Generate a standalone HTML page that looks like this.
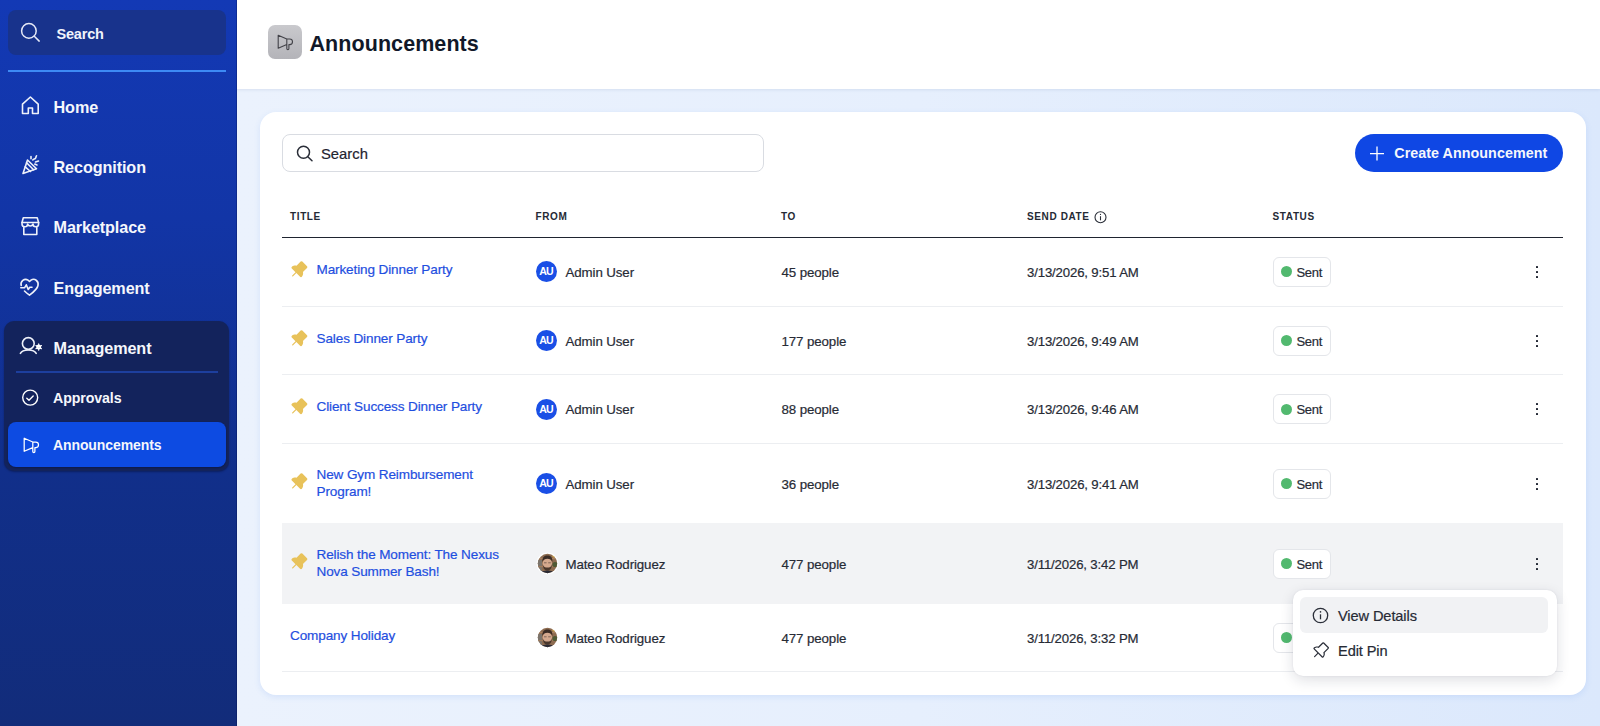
<!DOCTYPE html>
<html><head><meta charset="utf-8"><style>
*{box-sizing:border-box;margin:0;padding:0}
html,body{width:1600px;height:726px;overflow:hidden;font-family:"Liberation Sans",sans-serif;background:#e6effb}
.t{position:absolute;line-height:1;white-space:nowrap}
.a{position:absolute}
svg{position:absolute;overflow:visible}
.sb{position:absolute;left:0;top:0;width:237px;height:726px;background:linear-gradient(180deg,#1339b5 0%,#1235a6 30%,#112f8a 65%,#122c7a 100%);}
.main{position:absolute;left:237px;top:0;width:1363px;height:726px;background:linear-gradient(90deg,#ebf2fd 0%,#e6effd 50%,#dbe8fc 100%)}
.hdr{position:absolute;left:237px;top:0;width:1363px;height:89px;background:#fff;box-shadow:0 1px 3px rgba(40,70,130,0.10)}
.card{position:absolute;left:260px;top:112px;width:1326px;height:583px;background:#fff;border-radius:16px;box-shadow:0 2px 6px rgba(60,120,230,0.13)}
.sep{position:absolute;left:282px;width:1281px;height:1px;background:#eceef1}
.pin{position:absolute}
.badge{position:absolute;left:1273px;width:58px;height:30px;border:1px solid #e4e6ea;border-radius:6px;background:#fff}
.dot{position:absolute;left:7px;top:8.5px;width:11px;height:11px;border-radius:50%;background:#52b96f}
.keb{position:absolute;left:1536px;width:2px;height:2px;background:#1f2430;border-radius:0.5px}
.au{position:absolute;left:536px;width:21px;height:21px;border-radius:50%;background:#1a4fe6;color:#fff;font-weight:bold;font-size:10.6px;line-height:21.5px;text-align:center;letter-spacing:-0.9px;text-indent:-0.9px}
.ph{position:absolute;left:536px;width:21px;height:21px;border-radius:50%;background:radial-gradient(circle at 50% 40%,#c99a7a 0%,#a4765a 35%,#5a4438 60%,#3c3430 100%)}
</style></head><body>
<div class="main"></div><div class="hdr"></div><div class="sb"></div><div class="a" style="left:236px;top:0;width:1px;height:726px;background:rgba(0,10,70,0.28)"></div><div class="a" style="left:8px;top:10px;width:218px;height:45px;border-radius:8px;background:#18338c"></div><svg style="left:19.5px;top:22px" width="22" height="22" viewBox="0 0 22 22"><circle cx="8.9" cy="8.9" r="7.3" fill="none" stroke="#e6eaf7" stroke-width="1.5"/><path d="M14.3 14.3 L19.2 19.1" stroke="#e6eaf7" stroke-width="1.5" stroke-linecap="round"/></svg><div class="t" style="left:56.5px;top:27.03px;font-size:14.5px;color:#f0f3fb;font-weight:bold;letter-spacing:-0.2px;">Search</div>
<div class="a" style="left:8px;top:70px;width:218px;height:2px;background:#3d8af5"></div><div class="a" style="left:4px;top:321px;width:225px;height:149.5px;border-radius:10px;background:#13235c;box-shadow:0 1px 2px rgba(0,0,20,0.35)"></div><div class="a" style="left:16px;top:371px;width:202px;height:2px;background:#1d3f9e"></div><div class="a" style="left:8px;top:422px;width:218px;height:45px;border-radius:8px;background:#0d4be2;box-shadow:0 1px 2px rgba(0,0,0,0.25)"></div><div class="t" style="left:53.5px;top:98.79px;font-size:16.2px;color:#f5f7fc;font-weight:bold;letter-spacing:-0.1px;">Home</div>
<div class="t" style="left:53.5px;top:159.19px;font-size:16.2px;color:#f5f7fc;font-weight:bold;letter-spacing:-0.1px;">Recognition</div>
<div class="t" style="left:53.5px;top:219.39px;font-size:16.2px;color:#f5f7fc;font-weight:bold;letter-spacing:-0.1px;">Marketplace</div>
<div class="t" style="left:53.5px;top:279.89px;font-size:16.2px;color:#f5f7fc;font-weight:bold;letter-spacing:-0.1px;">Engagement</div>
<div class="t" style="left:53.5px;top:339.79px;font-size:16.2px;color:#f5f7fc;font-weight:bold;letter-spacing:-0.1px;">Management</div>
<div class="t" style="left:53px;top:391.38px;font-size:14.2px;color:#f5f7fc;font-weight:bold;letter-spacing:-0.1px;">Approvals</div>
<div class="t" style="left:53px;top:438.45px;font-size:14px;color:#f5f7fc;font-weight:bold;letter-spacing:-0.1px;">Announcements</div>
<svg style="left:21px;top:96px" width="19" height="19" viewBox="0 0 19 19"><path d="M1.5 17.5 V8.2 L9.4 1 L17.2 8.2 V17.5 H11.5 V12 H7.3 V17.5 Z" stroke="#eef1fa" stroke-width="1.6" fill="none" stroke-linecap="round" stroke-linejoin="round"/></svg><svg style="left:21px;top:154px" width="22" height="22" viewBox="0 0 22 22"><path d="M2 19.5 L6.5 6 L15.5 14.8 Z" stroke="#eef1fa" stroke-width="1.6" fill="none" stroke-linecap="round" stroke-linejoin="round"/><path d="M4.2 12.8 L9.5 17.5 M5.6 8.8 L12.6 15.8" stroke="#eef1fa" stroke-width="1.6" fill="none" stroke-linecap="round" stroke-linejoin="round"/><path d="M10 2.5 V4.8 M11.8 6 C13 4.5 13.5 5.5 14.5 4.2 C15.5 3 14.6 2.5 15.5 1.8 M14.5 8 L17.5 7 M13.8 10 L16 11" stroke="#eef1fa" stroke-width="1.6" fill="none" stroke-linecap="round" stroke-linejoin="round"/></svg><svg style="left:20px;top:216px" width="21" height="21" viewBox="0 0 21 21"><path d="M3.8 11.5 V18.5 H16.8 V11.5" stroke="#eef1fa" stroke-width="1.6" fill="none" stroke-linecap="round" stroke-linejoin="round"/><path d="M2 6.5 L3.3 1.8 H17.2 L18.6 6.5 Z" stroke="#eef1fa" stroke-width="1.6" fill="none" stroke-linecap="round" stroke-linejoin="round"/><path d="M2 6.5 V8 A2.8 2.8 0 0 0 7.6 8 A2.8 2.8 0 0 0 13 8 A2.8 2.8 0 0 0 18.6 8 V6.5" stroke="#eef1fa" stroke-width="1.6" fill="none" stroke-linecap="round" stroke-linejoin="round"/></svg><svg style="left:19px;top:277px" width="22" height="22" viewBox="0 0 22 22"><path d="M2.2 8.5 C1 4.5 5.5 0.8 9 3.2 L10.5 4.5 L12 3.2 C15.5 0.8 20 4 19 8.5 C18.5 11.5 14 15.5 10.5 18.2 C8.5 16.7 7 15.5 5.5 14" stroke="#eef1fa" stroke-width="1.6" fill="none" stroke-linecap="round" stroke-linejoin="round"/><path d="M1.8 10.8 H5.5 L7.3 7.8 L9.2 12.5 L10.8 10.2 H13" stroke="#eef1fa" stroke-width="1.6" fill="none" stroke-linecap="round" stroke-linejoin="round"/></svg><svg style="left:19px;top:337px" width="24" height="20" viewBox="0 0 24 20"><circle cx="9.3" cy="6.5" r="5.9" stroke="#eef1fa" stroke-width="1.6" fill="none" stroke-linecap="round" stroke-linejoin="round"/><path d="M1.4 16.4 C3.6 11.9 15 11.9 17.2 16.4" stroke="#eef1fa" stroke-width="1.6" fill="none" stroke-linecap="round" stroke-linejoin="round"/><circle cx="19.7" cy="10.1" r="2.5" fill="#fff"/><circle cx="19.7" cy="10.1" r="0.8" fill="#13235c"/><path d="M19.7 6.9 V13.3 M16.9 8.5 L22.5 11.7 M16.9 11.7 L22.5 8.5" stroke="#fff" stroke-width="1.1" stroke-linecap="round"/></svg><svg style="left:21px;top:389px" width="18" height="18" viewBox="0 0 18 18"><circle cx="9.2" cy="8.6" r="7.5" stroke="#fff" stroke-width="1.4" fill="none"/><path d="M5.8 9.3 L8 11.3 L12.2 7" stroke="#fff" stroke-width="1.4" fill="none" stroke-linecap="round" stroke-linejoin="round"/></svg><svg style="left:22.6px;top:437px" width="18" height="18" viewBox="0 0 18 18"><path d="M1.2 1.2 V14.3 L9.8 10.6 V5 Z M9.8 5 H12.7 A2.8 2.8 0 0 1 12.7 10.6 H11.9 M9.8 10.6 V14.6 A1 1 0 0 0 11.9 14.6 V10.6" stroke="#fff" stroke-width="1.25" fill="none" stroke-linejoin="round" stroke-linecap="round"/></svg><div class="a" style="left:268px;top:25px;width:34px;height:34px;border-radius:7px;background:linear-gradient(180deg,#c9c9cd,#b4b4b9)"></div><svg style="left:276.6px;top:33.6px" width="18" height="18" viewBox="0 0 18 18"><path d="M1.2 1.2 V14.3 L9.8 10.6 V5 Z M9.8 5 H12.7 A2.8 2.8 0 0 1 12.7 10.6 H11.9 M9.8 10.6 V14.6 A1 1 0 0 0 11.9 14.6 V10.6" stroke="#424248" stroke-width="1.1" fill="none" stroke-linejoin="round" stroke-linecap="round"/></svg><div class="t" style="left:309.5px;top:33.55px;font-size:21.5px;color:#111829;font-weight:bold;letter-spacing:0.07px;">Announcements</div>
<div class="card"></div><div class="a" style="left:282px;top:134px;width:482px;height:38px;border:1px solid #d9dce2;border-radius:8px;background:#fff"></div><svg style="left:296px;top:145px" width="18" height="18" viewBox="0 0 18 18"><circle cx="7.5" cy="7.3" r="6" fill="none" stroke="#2a2e38" stroke-width="1.5"/><path d="M11.8 11.7 L16 15.8" stroke="#2a2e38" stroke-width="1.5" stroke-linecap="round"/></svg><div class="t" style="left:321px;top:146.87px;font-size:14.8px;color:#1f2430;font-weight:normal;letter-spacing:0px;-webkit-text-stroke:0.2px #1f2430;">Search</div>
<div class="a" style="left:1355px;top:134px;width:208px;height:38px;border-radius:19px;background:#0f47e4"></div><svg style="left:1369px;top:146px" width="16" height="16" viewBox="0 0 16 16"><path d="M8 0.6 V14.6 M1 7.6 H15" stroke="#fff" stroke-width="1.3" stroke-linecap="butt"/></svg><div class="t" style="left:1394.3px;top:145.90px;font-size:14.3px;color:#f5f7fc;font-weight:bold;letter-spacing:0.05px;">Create Announcement</div>
<div class="t" style="left:290px;top:211.94px;font-size:10.0px;color:#252a35;font-weight:bold;letter-spacing:0.62px;">TITLE</div>
<div class="t" style="left:535.5px;top:211.94px;font-size:10.0px;color:#252a35;font-weight:bold;letter-spacing:0.62px;">FROM</div>
<div class="t" style="left:781px;top:211.94px;font-size:10.0px;color:#252a35;font-weight:bold;letter-spacing:0.62px;">TO</div>
<div class="t" style="left:1027px;top:211.94px;font-size:10.0px;color:#252a35;font-weight:bold;letter-spacing:0.62px;">SEND DATE</div>
<div class="t" style="left:1272.5px;top:211.94px;font-size:10.0px;color:#252a35;font-weight:bold;letter-spacing:0.62px;">STATUS</div>
<svg style="left:1094px;top:211px" width="13" height="13" viewBox="0 0 13 13"><circle cx="6.5" cy="6.2" r="5.5" fill="none" stroke="#2a2e38" stroke-width="1.1"/><path d="M6.5 5.2 V9.3" stroke="#2a2e38" stroke-width="1.1"/><circle cx="6.5" cy="3.4" r="0.6" fill="#2a2e38"/></svg><div class="a" style="left:282px;top:236.5px;width:1281px;height:1.5px;background:#1f2430"></div><div class="a" style="left:282px;top:523px;width:1281px;height:81px;background:#f2f3f5"></div><div class="sep" style="top:305.5px"></div><div class="sep" style="top:374.0px"></div><div class="sep" style="top:442.5px"></div><div class="sep" style="top:671.0px"></div><div class="t" style="left:316.5px;top:262.53px;font-size:13.55px;color:#1f4fe0;font-weight:normal;letter-spacing:-0.12px;-webkit-text-stroke:0.2px #1f4fe0;">Marketing Dinner Party</div>
<svg style="left:289.1px;top:259.6px" width="19.6" height="19.6" viewBox="0 0 256 256"><path d="M235.33,104l-53.47,53.65c4.56,12.67,6.45,33.89-13.19,60A15.93,15.93,0,0,1,157,224c-.38,0-.75,0-1.13,0a16,16,0,0,1-11.32-4.69L96.29,171,53.66,213.66a8,8,0,0,1-11.32-11.32L85,159.71l-48.3-48.3A16,16,0,0,1,38,87.63c25.42-20.51,49.75-16.48,60.4-13.14L152,20.7a16,16,0,0,1,22.63,0l60.69,60.68A16,16,0,0,1,235.33,104Z" fill="#e8c25a"/></svg><div class="au" style="top:261.0px">AU</div><div class="t" style="left:565.5px;top:265.74px;font-size:13.3px;color:#272b35;font-weight:normal;letter-spacing:-0.1px;-webkit-text-stroke:0.2px #272b35;">Admin User</div>
<div class="t" style="left:781.5px;top:265.74px;font-size:13.3px;color:#272b35;font-weight:normal;letter-spacing:-0.1px;-webkit-text-stroke:0.2px #272b35;">45 people</div>
<div class="t" style="left:1027px;top:265.83px;font-size:13.2px;color:#272b35;font-weight:normal;letter-spacing:-0.15px;-webkit-text-stroke:0.2px #272b35;">3/13/2026, 9:51 AM</div>
<div class="badge" style="top:256.5px"><div class="dot"></div></div><div class="t" style="left:1296.5px;top:265.60px;font-size:13px;color:#272b35;font-weight:normal;letter-spacing:-0.3px;-webkit-text-stroke:0.2px #272b35;">Sent</div>
<div class="keb" style="top:265.5px"></div><div class="keb" style="top:270.5px"></div><div class="keb" style="top:275.5px"></div><div class="t" style="left:316.5px;top:331.53px;font-size:13.55px;color:#1f4fe0;font-weight:normal;letter-spacing:-0.12px;-webkit-text-stroke:0.2px #1f4fe0;">Sales Dinner Party</div>
<svg style="left:289.1px;top:328.6px" width="19.6" height="19.6" viewBox="0 0 256 256"><path d="M235.33,104l-53.47,53.65c4.56,12.67,6.45,33.89-13.19,60A15.93,15.93,0,0,1,157,224c-.38,0-.75,0-1.13,0a16,16,0,0,1-11.32-4.69L96.29,171,53.66,213.66a8,8,0,0,1-11.32-11.32L85,159.71l-48.3-48.3A16,16,0,0,1,38,87.63c25.42-20.51,49.75-16.48,60.4-13.14L152,20.7a16,16,0,0,1,22.63,0l60.69,60.68A16,16,0,0,1,235.33,104Z" fill="#e8c25a"/></svg><div class="au" style="top:330.0px">AU</div><div class="t" style="left:565.5px;top:334.74px;font-size:13.3px;color:#272b35;font-weight:normal;letter-spacing:-0.1px;-webkit-text-stroke:0.2px #272b35;">Admin User</div>
<div class="t" style="left:781.5px;top:334.74px;font-size:13.3px;color:#272b35;font-weight:normal;letter-spacing:-0.1px;-webkit-text-stroke:0.2px #272b35;">177 people</div>
<div class="t" style="left:1027px;top:334.83px;font-size:13.2px;color:#272b35;font-weight:normal;letter-spacing:-0.15px;-webkit-text-stroke:0.2px #272b35;">3/13/2026, 9:49 AM</div>
<div class="badge" style="top:325.5px"><div class="dot"></div></div><div class="t" style="left:1296.5px;top:334.60px;font-size:13px;color:#272b35;font-weight:normal;letter-spacing:-0.3px;-webkit-text-stroke:0.2px #272b35;">Sent</div>
<div class="keb" style="top:334.5px"></div><div class="keb" style="top:339.5px"></div><div class="keb" style="top:344.5px"></div><div class="t" style="left:316.5px;top:400.03px;font-size:13.55px;color:#1f4fe0;font-weight:normal;letter-spacing:-0.12px;-webkit-text-stroke:0.2px #1f4fe0;">Client Success Dinner Party</div>
<svg style="left:289.1px;top:397.1px" width="19.6" height="19.6" viewBox="0 0 256 256"><path d="M235.33,104l-53.47,53.65c4.56,12.67,6.45,33.89-13.19,60A15.93,15.93,0,0,1,157,224c-.38,0-.75,0-1.13,0a16,16,0,0,1-11.32-4.69L96.29,171,53.66,213.66a8,8,0,0,1-11.32-11.32L85,159.71l-48.3-48.3A16,16,0,0,1,38,87.63c25.42-20.51,49.75-16.48,60.4-13.14L152,20.7a16,16,0,0,1,22.63,0l60.69,60.68A16,16,0,0,1,235.33,104Z" fill="#e8c25a"/></svg><div class="au" style="top:398.5px">AU</div><div class="t" style="left:565.5px;top:403.24px;font-size:13.3px;color:#272b35;font-weight:normal;letter-spacing:-0.1px;-webkit-text-stroke:0.2px #272b35;">Admin User</div>
<div class="t" style="left:781.5px;top:403.24px;font-size:13.3px;color:#272b35;font-weight:normal;letter-spacing:-0.1px;-webkit-text-stroke:0.2px #272b35;">88 people</div>
<div class="t" style="left:1027px;top:403.33px;font-size:13.2px;color:#272b35;font-weight:normal;letter-spacing:-0.15px;-webkit-text-stroke:0.2px #272b35;">3/13/2026, 9:46 AM</div>
<div class="badge" style="top:394px"><div class="dot"></div></div><div class="t" style="left:1296.5px;top:403.10px;font-size:13px;color:#272b35;font-weight:normal;letter-spacing:-0.3px;-webkit-text-stroke:0.2px #272b35;">Sent</div>
<div class="keb" style="top:403px"></div><div class="keb" style="top:408px"></div><div class="keb" style="top:413px"></div><div class="t" style="left:316.5px;top:467.73px;font-size:13.55px;color:#1f4fe0;font-weight:normal;letter-spacing:-0.12px;-webkit-text-stroke:0.2px #1f4fe0;">New Gym Reimbursement</div>
<div class="t" style="left:316.5px;top:484.83px;font-size:13.55px;color:#1f4fe0;font-weight:normal;letter-spacing:-0.12px;-webkit-text-stroke:0.2px #1f4fe0;">Program!</div>
<svg style="left:289.1px;top:471.6px" width="19.6" height="19.6" viewBox="0 0 256 256"><path d="M235.33,104l-53.47,53.65c4.56,12.67,6.45,33.89-13.19,60A15.93,15.93,0,0,1,157,224c-.38,0-.75,0-1.13,0a16,16,0,0,1-11.32-4.69L96.29,171,53.66,213.66a8,8,0,0,1-11.32-11.32L85,159.71l-48.3-48.3A16,16,0,0,1,38,87.63c25.42-20.51,49.75-16.48,60.4-13.14L152,20.7a16,16,0,0,1,22.63,0l60.69,60.68A16,16,0,0,1,235.33,104Z" fill="#e8c25a"/></svg><div class="au" style="top:473.0px">AU</div><div class="t" style="left:565.5px;top:477.74px;font-size:13.3px;color:#272b35;font-weight:normal;letter-spacing:-0.1px;-webkit-text-stroke:0.2px #272b35;">Admin User</div>
<div class="t" style="left:781.5px;top:477.74px;font-size:13.3px;color:#272b35;font-weight:normal;letter-spacing:-0.1px;-webkit-text-stroke:0.2px #272b35;">36 people</div>
<div class="t" style="left:1027px;top:477.83px;font-size:13.2px;color:#272b35;font-weight:normal;letter-spacing:-0.15px;-webkit-text-stroke:0.2px #272b35;">3/13/2026, 9:41 AM</div>
<div class="badge" style="top:468.5px"><div class="dot"></div></div><div class="t" style="left:1296.5px;top:477.60px;font-size:13px;color:#272b35;font-weight:normal;letter-spacing:-0.3px;-webkit-text-stroke:0.2px #272b35;">Sent</div>
<div class="keb" style="top:477.5px"></div><div class="keb" style="top:482.5px"></div><div class="keb" style="top:487.5px"></div><div class="t" style="left:316.5px;top:547.73px;font-size:13.55px;color:#1f4fe0;font-weight:normal;letter-spacing:-0.12px;-webkit-text-stroke:0.2px #1f4fe0;">Relish the Moment: The Nexus</div>
<div class="t" style="left:316.5px;top:564.83px;font-size:13.55px;color:#1f4fe0;font-weight:normal;letter-spacing:-0.12px;-webkit-text-stroke:0.2px #1f4fe0;">Nova Summer Bash!</div>
<svg style="left:289.1px;top:551.6px" width="19.6" height="19.6" viewBox="0 0 256 256"><path d="M235.33,104l-53.47,53.65c4.56,12.67,6.45,33.89-13.19,60A15.93,15.93,0,0,1,157,224c-.38,0-.75,0-1.13,0a16,16,0,0,1-11.32-4.69L96.29,171,53.66,213.66a8,8,0,0,1-11.32-11.32L85,159.71l-48.3-48.3A16,16,0,0,1,38,87.63c25.42-20.51,49.75-16.48,60.4-13.14L152,20.7a16,16,0,0,1,22.63,0l60.69,60.68A16,16,0,0,1,235.33,104Z" fill="#e8c25a"/></svg><svg style="left:535.8px;top:552.0px" width="23" height="23" viewBox="0 0 23 23"><circle cx="11.5" cy="11.5" r="11" fill="#fff" opacity="0.85"/><clipPath id="cp563"><circle cx="11.5" cy="11.5" r="9.7"/></clipPath><g clip-path="url(#cp563)"><rect width="23" height="23" fill="#8d6b50"/><rect x="0" y="8" width="6" height="15" fill="#7b746c"/><rect x="0" y="6" width="23" height="1.2" fill="#a88060"/><rect x="0" y="14" width="23" height="1.2" fill="#a07a5a"/><circle cx="19" cy="12.5" r="2.6" fill="#4f5a35"/><circle cx="18" cy="4" r="1.6" fill="#d8b050"/><ellipse cx="11.3" cy="11.6" rx="4.7" ry="5.6" fill="#d4a88e"/><path d="M6.4 10 C6 5 8.5 3.4 11.4 3.4 C14.5 3.4 16.8 5 16.3 10 C15.6 7.8 13.8 6.8 11.4 6.8 C9 6.8 7.2 7.8 6.4 10Z" fill="#3a2b24"/><path d="M6.8 12.5 C7 17 9.2 18.5 11.4 18.5 C13.6 18.5 15.8 17 16 12.5 C15.2 14.8 13.6 15.6 11.4 15.6 C9.2 15.6 7.6 14.8 6.8 12.5Z" fill="#4a372c"/><path d="M8 10.8 H10.6 M12.2 10.8 H14.8" stroke="#6a5548" stroke-width="0.8"/><path d="M3 23 C4 19.5 8 18.6 11.5 18.6 C15 18.6 19 19.5 20 23Z" fill="#2b2b35"/><path d="M3 23 C3.5 20.5 5 19.5 7 19.2 L7 23Z" fill="#4a5a78"/></g></svg><div class="t" style="left:565.5px;top:557.74px;font-size:13.3px;color:#272b35;font-weight:normal;letter-spacing:-0.1px;-webkit-text-stroke:0.2px #272b35;">Mateo Rodriguez</div>
<div class="t" style="left:781.5px;top:557.74px;font-size:13.3px;color:#272b35;font-weight:normal;letter-spacing:-0.1px;-webkit-text-stroke:0.2px #272b35;">477 people</div>
<div class="t" style="left:1027px;top:557.83px;font-size:13.2px;color:#272b35;font-weight:normal;letter-spacing:-0.15px;-webkit-text-stroke:0.2px #272b35;">3/11/2026, 3:42 PM</div>
<div class="badge" style="top:548.5px"><div class="dot"></div></div><div class="t" style="left:1296.5px;top:557.60px;font-size:13px;color:#272b35;font-weight:normal;letter-spacing:-0.3px;-webkit-text-stroke:0.2px #272b35;">Sent</div>
<div class="keb" style="top:557.5px"></div><div class="keb" style="top:562.5px"></div><div class="keb" style="top:567.5px"></div><div class="t" style="left:290px;top:628.53px;font-size:13.55px;color:#1f4fe0;font-weight:normal;letter-spacing:-0.12px;-webkit-text-stroke:0.2px #1f4fe0;">Company Holiday</div>
<svg style="left:535.8px;top:626.0px" width="23" height="23" viewBox="0 0 23 23"><circle cx="11.5" cy="11.5" r="11" fill="#fff" opacity="0.85"/><clipPath id="cp637"><circle cx="11.5" cy="11.5" r="9.7"/></clipPath><g clip-path="url(#cp637)"><rect width="23" height="23" fill="#8d6b50"/><rect x="0" y="8" width="6" height="15" fill="#7b746c"/><rect x="0" y="6" width="23" height="1.2" fill="#a88060"/><rect x="0" y="14" width="23" height="1.2" fill="#a07a5a"/><circle cx="19" cy="12.5" r="2.6" fill="#4f5a35"/><circle cx="18" cy="4" r="1.6" fill="#d8b050"/><ellipse cx="11.3" cy="11.6" rx="4.7" ry="5.6" fill="#d4a88e"/><path d="M6.4 10 C6 5 8.5 3.4 11.4 3.4 C14.5 3.4 16.8 5 16.3 10 C15.6 7.8 13.8 6.8 11.4 6.8 C9 6.8 7.2 7.8 6.4 10Z" fill="#3a2b24"/><path d="M6.8 12.5 C7 17 9.2 18.5 11.4 18.5 C13.6 18.5 15.8 17 16 12.5 C15.2 14.8 13.6 15.6 11.4 15.6 C9.2 15.6 7.6 14.8 6.8 12.5Z" fill="#4a372c"/><path d="M8 10.8 H10.6 M12.2 10.8 H14.8" stroke="#6a5548" stroke-width="0.8"/><path d="M3 23 C4 19.5 8 18.6 11.5 18.6 C15 18.6 19 19.5 20 23Z" fill="#2b2b35"/><path d="M3 23 C3.5 20.5 5 19.5 7 19.2 L7 23Z" fill="#4a5a78"/></g></svg><div class="t" style="left:565.5px;top:631.74px;font-size:13.3px;color:#272b35;font-weight:normal;letter-spacing:-0.1px;-webkit-text-stroke:0.2px #272b35;">Mateo Rodriguez</div>
<div class="t" style="left:781.5px;top:631.74px;font-size:13.3px;color:#272b35;font-weight:normal;letter-spacing:-0.1px;-webkit-text-stroke:0.2px #272b35;">477 people</div>
<div class="t" style="left:1027px;top:631.83px;font-size:13.2px;color:#272b35;font-weight:normal;letter-spacing:-0.15px;-webkit-text-stroke:0.2px #272b35;">3/11/2026, 3:32 PM</div>
<div class="badge" style="top:622.5px"><div class="dot"></div></div><div class="t" style="left:1296.5px;top:631.60px;font-size:13px;color:#272b35;font-weight:normal;letter-spacing:-0.3px;-webkit-text-stroke:0.2px #272b35;">Sent</div>
<div class="keb" style="top:631.5px"></div><div class="keb" style="top:636.5px"></div><div class="keb" style="top:641.5px"></div><div class="a" style="left:1292.5px;top:590px;width:264px;height:86px;border-radius:10px;background:#fff;box-shadow:0 4px 14px rgba(20,30,60,0.14),0 0 2px rgba(20,30,60,0.08)"></div><div class="a" style="left:1300px;top:597px;width:248px;height:36px;border-radius:6px;background:#f1f2f4"></div><svg style="left:1312px;top:607px" width="17" height="17" viewBox="0 0 17 17"><circle cx="8.5" cy="8.5" r="7.2" fill="none" stroke="#2a2e38" stroke-width="1.3"/><path d="M8.5 7.3 V12.3" stroke="#2a2e38" stroke-width="1.3"/><circle cx="8.5" cy="4.9" r="0.8" fill="#2a2e38"/></svg><div class="t" style="left:1338px;top:608.64px;font-size:14.6px;color:#262a34;font-weight:normal;letter-spacing:-0.1px;-webkit-text-stroke:0.2px #262a34;">View Details</div>
<svg style="left:1310.9px;top:641.2px" width="19.2" height="19.2" viewBox="0 0 256 256"><path d="M235.32,81.37,174.63,20.69a16,16,0,0,0-22.63,0L98.37,74.49c-10.66-3.34-35-7.37-60.4,13.140a16,16,0,0,0-1.29,23.78L85,159.71,42.34,202.34a8,8,0,0,0,11.32,11.320L96.29,171l48.29,48.29A16,16,0,0,0,155.9,224c.38,0,.75,0,1.13,0a15.930,15.930,0,0,0,11.64-6.33c19.64-26.1,17.75-47.32,13.19-60L235.33,104A16,16,0,0,0,235.32,81.37ZM224,92.69h0l-57.27,57.46a8,8,0,0,0-1.49,9.22c9.46,18.930-1.8,38.59-9.34,48.62L48,100.08c12.08-9.74,23.64-12.31,32.48-12.31A40.13,40.13,0,0,1,96.81,91a8,8,0,0,0,9.25-1.51L163.32,32,224,92.68Z" fill="#2a2e38"/></svg><div class="t" style="left:1338px;top:643.94px;font-size:14.6px;color:#262a34;font-weight:normal;letter-spacing:-0.1px;-webkit-text-stroke:0.2px #262a34;">Edit Pin</div>
</body></html>
